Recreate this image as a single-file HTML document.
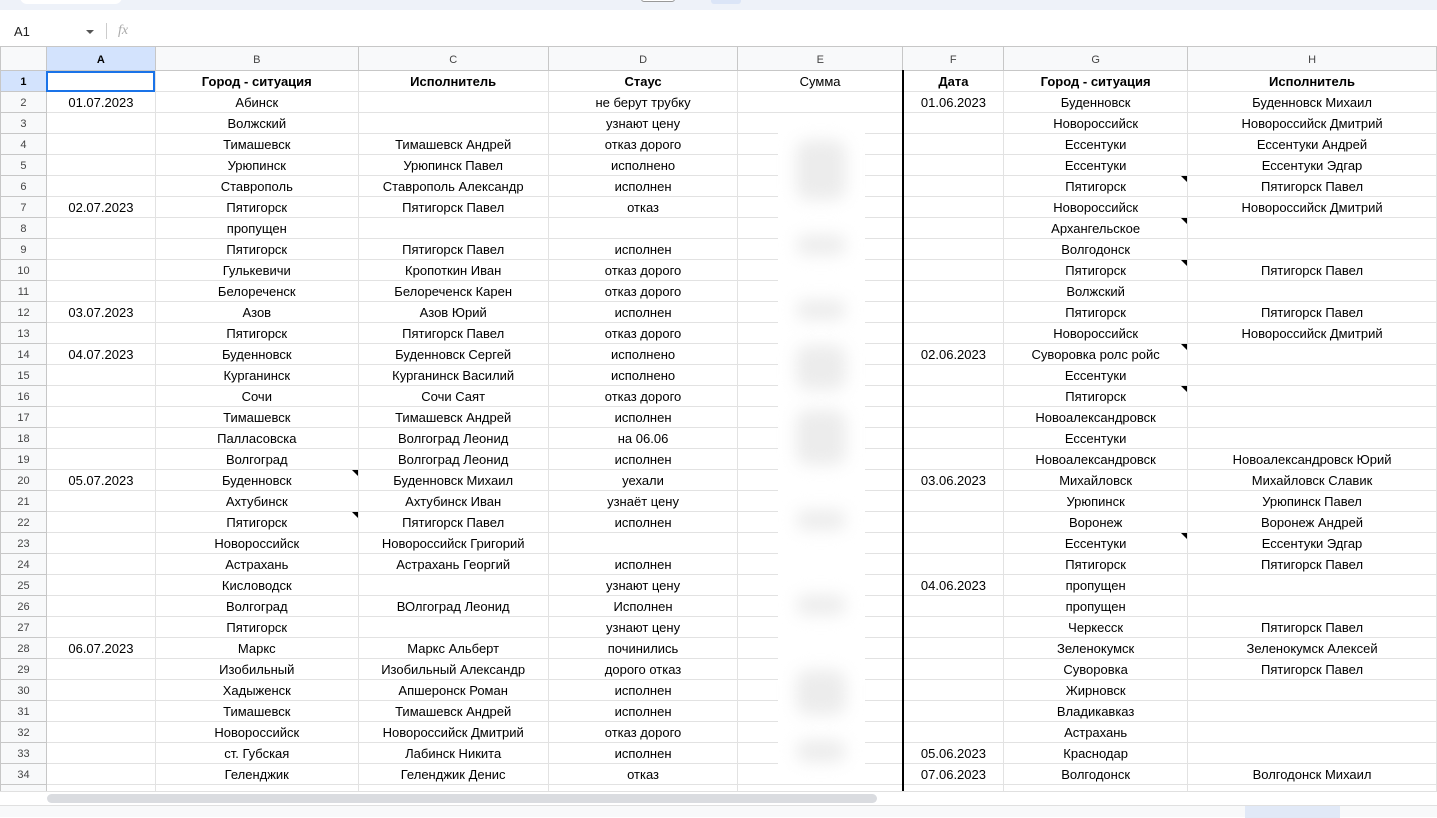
<!DOCTYPE html>
<html><head><meta charset="utf-8"><style>
*{margin:0;padding:0;box-sizing:border-box}
body{width:1437px;height:817px;overflow:hidden;background:#fff;font-family:"Liberation Sans",Arial,sans-serif;position:relative}
.top{position:absolute;left:0;top:0;width:1437px;height:10px;background:#eef2f9}
.top .pill{position:absolute;left:20px;top:-10px;width:102px;height:14px;background:#fff;border-radius:8px}
.top .b1{position:absolute;left:641px;top:-4px;width:34px;height:6px;border:1px solid #999;border-radius:3px;background:#fff}
.top .b2{position:absolute;left:711px;top:-4px;width:30px;height:8px;background:#dbe5f7;border-radius:3px}
.fb{position:absolute;left:0;top:17px;width:1437px;height:29px;background:#fff;font-size:13px;color:#222}
.fb .ref{position:absolute;left:14px;top:7px}
.fb .dd{position:absolute;left:86px;top:13px;border:4px solid transparent;border-top:4px solid #555;border-bottom:0}
.fb .sep{position:absolute;left:106px;top:6px;width:1px;height:16px;background:#ccc}
.fb .fx{position:absolute;left:118px;top:6px;font-style:italic;color:#aaa;font-family:"Liberation Serif",serif;font-size:14px}
table{position:absolute;left:0;top:46px;border-collapse:collapse;table-layout:fixed;font-size:13px;color:#000}
td{height:21px;border:1px solid #e2e2e2;text-align:center;white-space:nowrap;overflow:hidden;padding:2px 2px 0;position:relative;line-height:18px}
tr.h td{height:24px;background:#f8f9fa;border-color:#c7c7c7;font-size:11px;color:#444;padding-top:3px}
td.rn{background:#f8f9fa;border-color:#c7c7c7;font-size:11px;color:#444}
tr.h td.sel{background:#d3e3fd;color:#000;font-weight:bold}
td.rsel{background:#d3e3fd!important;color:#000!important;font-weight:bold}
tr.r1 td{font-weight:bold}
tr.r1 td.e{font-weight:normal}
td.f{border-left:2px solid #000}
td.a1{outline:2px solid #1a73e8;outline-offset:-2px}
td.n::after{content:"";position:absolute;right:0;top:0;border-top:6px solid #000;border-left:6px solid transparent}
.wp{position:absolute;left:778px;top:113px;width:87px;height:671px;background:#fff}
.blur{position:absolute;left:796px;width:50px;background:#ececec;filter:blur(8px);border-radius:12px}
.sb{position:absolute;left:0;top:791px;width:1437px;height:14px;background:#fff;border-top:1px solid #e0e0e0}
.sb .th{position:absolute;left:47px;top:2px;width:830px;height:9px;background:#dadce0;border-radius:5px}
.bot{position:absolute;left:0;top:805px;width:1437px;height:12px;background:#f8f9fa;border-top:1px solid #e0e0e0}
.bot .tab{position:absolute;left:1245px;top:0;width:95px;height:12px;background:#e1e9f7}
</style></head><body>
<div class="top"><div class="pill"></div><div class="b1"></div><div class="b2"></div></div>
<div class="fb"><span class="ref">A1</span><span class="dd"></span><span class="sep"></span><span class="fx">fx</span></div>
<table>
<colgroup><col style="width:46px"><col style="width:109px"><col style="width:203px"><col style="width:190px"><col style="width:190px"><col style="width:165px"><col style="width:101px"><col style="width:184px"><col style="width:249px"></colgroup>
<tr class="h"><td></td><td class="sel">A</td><td>B</td><td>C</td><td>D</td><td>E</td><td>F</td><td>G</td><td>H</td></tr>
<tr class="r1"><td class="rn rsel">1</td><td class="a1"></td><td>Город - ситуация</td><td>Исполнитель</td><td>Стаус</td><td class="e">Сумма</td><td class="f">Дата</td><td>Город - ситуация</td><td>Исполнитель</td></tr>
<tr><td class="rn">2</td><td>01.07.2023</td><td>Абинск</td><td></td><td>не берут трубку</td><td></td><td class="f">01.06.2023</td><td>Буденновск</td><td>Буденновск Михаил</td></tr>
<tr><td class="rn">3</td><td></td><td>Волжский</td><td></td><td>узнают цену</td><td></td><td class="f"></td><td>Новороссийск</td><td>Новороссийск Дмитрий</td></tr>
<tr><td class="rn">4</td><td></td><td>Тимашевск</td><td>Тимашевск Андрей</td><td>отказ дорого</td><td></td><td class="f"></td><td>Ессентуки</td><td>Ессентуки Андрей</td></tr>
<tr><td class="rn">5</td><td></td><td>Урюпинск</td><td>Урюпинск Павел</td><td>исполнено</td><td></td><td class="f"></td><td>Ессентуки</td><td>Ессентуки Эдгар</td></tr>
<tr><td class="rn">6</td><td></td><td>Ставрополь</td><td>Ставрополь Александр</td><td>исполнен</td><td></td><td class="f"></td><td class="n">Пятигорск</td><td>Пятигорск Павел</td></tr>
<tr><td class="rn">7</td><td>02.07.2023</td><td>Пятигорск</td><td>Пятигорск Павел</td><td>отказ</td><td></td><td class="f"></td><td>Новороссийск</td><td>Новороссийск Дмитрий</td></tr>
<tr><td class="rn">8</td><td></td><td>пропущен</td><td></td><td></td><td></td><td class="f"></td><td class="n">Архангельское</td><td></td></tr>
<tr><td class="rn">9</td><td></td><td>Пятигорск</td><td>Пятигорск Павел</td><td>исполнен</td><td></td><td class="f"></td><td>Волгодонск</td><td></td></tr>
<tr><td class="rn">10</td><td></td><td>Гулькевичи</td><td>Кропоткин Иван</td><td>отказ дорого</td><td></td><td class="f"></td><td class="n">Пятигорск</td><td>Пятигорск Павел</td></tr>
<tr><td class="rn">11</td><td></td><td>Белореченск</td><td>Белореченск Карен</td><td>отказ дорого</td><td></td><td class="f"></td><td>Волжский</td><td></td></tr>
<tr><td class="rn">12</td><td>03.07.2023</td><td>Азов</td><td>Азов Юрий</td><td>исполнен</td><td></td><td class="f"></td><td>Пятигорск</td><td>Пятигорск Павел</td></tr>
<tr><td class="rn">13</td><td></td><td>Пятигорск</td><td>Пятигорск Павел</td><td>отказ дорого</td><td></td><td class="f"></td><td>Новороссийск</td><td>Новороссийск Дмитрий</td></tr>
<tr><td class="rn">14</td><td>04.07.2023</td><td>Буденновск</td><td>Буденновск Сергей</td><td>исполнено</td><td></td><td class="f">02.06.2023</td><td class="n">Суворовка ролс ройс</td><td></td></tr>
<tr><td class="rn">15</td><td></td><td>Курганинск</td><td>Курганинск Василий</td><td>исполнено</td><td></td><td class="f"></td><td>Ессентуки</td><td></td></tr>
<tr><td class="rn">16</td><td></td><td>Сочи</td><td>Сочи Саят</td><td>отказ дорого</td><td></td><td class="f"></td><td class="n">Пятигорск</td><td></td></tr>
<tr><td class="rn">17</td><td></td><td>Тимашевск</td><td>Тимашевск Андрей</td><td>исполнен</td><td></td><td class="f"></td><td>Новоалександровск</td><td></td></tr>
<tr><td class="rn">18</td><td></td><td>Палласовска</td><td>Волгоград Леонид</td><td>на 06.06</td><td></td><td class="f"></td><td>Ессентуки</td><td></td></tr>
<tr><td class="rn">19</td><td></td><td>Волгоград</td><td>Волгоград Леонид</td><td>исполнен</td><td></td><td class="f"></td><td>Новоалександровск</td><td>Новоалександровск Юрий</td></tr>
<tr><td class="rn">20</td><td>05.07.2023</td><td class="n">Буденновск</td><td>Буденновск Михаил</td><td>уехали</td><td></td><td class="f">03.06.2023</td><td>Михайловск</td><td>Михайловск Славик</td></tr>
<tr><td class="rn">21</td><td></td><td>Ахтубинск</td><td>Ахтубинск Иван</td><td>узнаёт цену</td><td></td><td class="f"></td><td>Урюпинск</td><td>Урюпинск Павел</td></tr>
<tr><td class="rn">22</td><td></td><td class="n">Пятигорск</td><td>Пятигорск Павел</td><td>исполнен</td><td></td><td class="f"></td><td>Воронеж</td><td>Воронеж Андрей</td></tr>
<tr><td class="rn">23</td><td></td><td>Новороссийск</td><td>Новороссийск Григорий</td><td></td><td></td><td class="f"></td><td class="n">Ессентуки</td><td>Ессентуки Эдгар</td></tr>
<tr><td class="rn">24</td><td></td><td>Астрахань</td><td>Астрахань Георгий</td><td>исполнен</td><td></td><td class="f"></td><td>Пятигорск</td><td>Пятигорск Павел</td></tr>
<tr><td class="rn">25</td><td></td><td>Кисловодск</td><td></td><td>узнают цену</td><td></td><td class="f">04.06.2023</td><td>пропущен</td><td></td></tr>
<tr><td class="rn">26</td><td></td><td>Волгоград</td><td>ВОлгоград Леонид</td><td>Исполнен</td><td></td><td class="f"></td><td>пропущен</td><td></td></tr>
<tr><td class="rn">27</td><td></td><td>Пятигорск</td><td></td><td>узнают цену</td><td></td><td class="f"></td><td>Черкесск</td><td>Пятигорск Павел</td></tr>
<tr><td class="rn">28</td><td>06.07.2023</td><td>Маркс</td><td>Маркс Альберт</td><td>починились</td><td></td><td class="f"></td><td>Зеленокумск</td><td>Зеленокумск Алексей</td></tr>
<tr><td class="rn">29</td><td></td><td>Изобильный</td><td>Изобильный Александр</td><td>дорого отказ</td><td></td><td class="f"></td><td>Суворовка</td><td>Пятигорск Павел</td></tr>
<tr><td class="rn">30</td><td></td><td>Хадыженск</td><td>Апшеронск Роман</td><td>исполнен</td><td></td><td class="f"></td><td>Жирновск</td><td></td></tr>
<tr><td class="rn">31</td><td></td><td>Тимашевск</td><td>Тимашевск Андрей</td><td>исполнен</td><td></td><td class="f"></td><td>Владикавказ</td><td></td></tr>
<tr><td class="rn">32</td><td></td><td>Новороссийск</td><td>Новороссийск Дмитрий</td><td>отказ дорого</td><td></td><td class="f"></td><td>Астрахань</td><td></td></tr>
<tr><td class="rn">33</td><td></td><td>ст. Губская</td><td>Лабинск Никита</td><td>исполнен</td><td></td><td class="f">05.06.2023</td><td>Краснодар</td><td></td></tr>
<tr><td class="rn">34</td><td></td><td>Геленджик</td><td>Геленджик Денис</td><td>отказ</td><td></td><td class="f">07.06.2023</td><td>Волгодонск</td><td>Волгодонск Михаил</td></tr>
<tr><td class="rn">35</td><td>07.07.23</td><td>Т</td><td>Т А</td><td></td><td></td><td class="f"></td><td>К Л</td><td>К Л А</td></tr>
</table>
<div class="wp"></div>
<div class="blur" style="top:140px;height:60px"></div>
<div class="blur" style="top:235px;height:20px"></div>
<div class="blur" style="top:300px;height:20px"></div>
<div class="blur" style="top:345px;height:45px"></div>
<div class="blur" style="top:410px;height:55px"></div>
<div class="blur" style="top:510px;height:20px"></div>
<div class="blur" style="top:595px;height:20px"></div>
<div class="blur" style="top:670px;height:45px"></div>
<div class="blur" style="top:740px;height:22px"></div>
<div class="sb"><div class="th"></div></div>
<div class="bot"><div class="tab"></div></div>
</body></html>
